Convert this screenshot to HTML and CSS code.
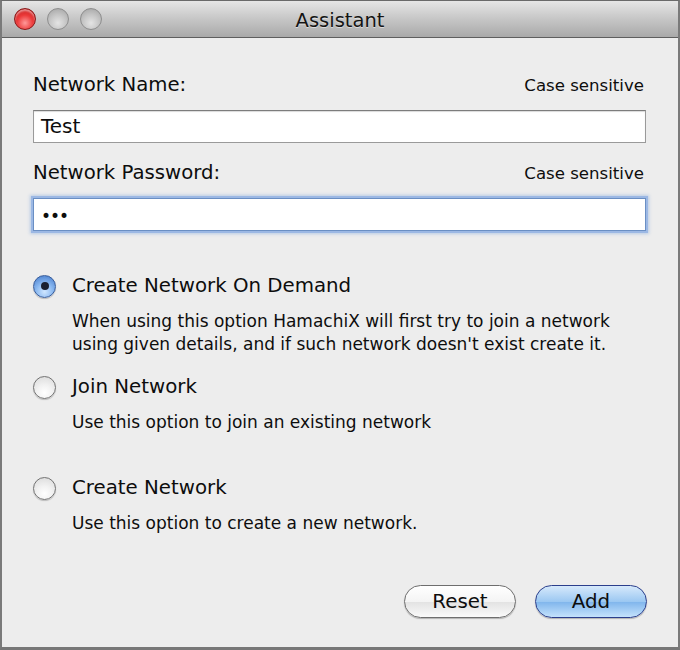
FILE: index.html
```html
<!DOCTYPE html>
<html>
<head>
<meta charset="utf-8">
<link rel="stylesheet" href="styles.css">
</head>
<body>
<div class="window">
  <div class="titlebar">
    <div class="lights">
      <span class="light red"></span>
      <span class="light gray"></span>
      <span class="light gray"></span>
    </div>
    <div class="title">Assistant</div>
  </div>
  <div class="content">
    <div class="field-head first">
      <span class="label">Network Name:</span>
      <span class="hint">Case sensitive</span>
    </div>
    <div class="input">Test</div>
    <div class="field-head second">
      <span class="label">Network Password:</span>
      <span class="hint">Case sensitive</span>
    </div>
    <div class="input focused"><span class="dots">•••</span></div>

    <div class="option opt1">
      <span class="radio checked"><span class="dot"></span></span>
      <span class="opt-label">Create Network On Demand</span>
    </div>
    <div class="desc">When using this option HamachiX will first try to join a network<br>using given details, and if such network doesn't exist create it.</div>

    <div class="option opt2">
      <span class="radio"></span>
      <span class="opt-label">Join Network</span>
    </div>
    <div class="desc">Use this option to join an existing network</div>

    <div class="option opt3">
      <span class="radio"></span>
      <span class="opt-label">Create Network</span>
    </div>
    <div class="desc">Use this option to create a new network.</div>

    <div class="buttons">
      <span class="btn">Reset</span>
      <span class="btn primary">Add</span>
    </div>
  </div>
</div>
</body>
</html>
```
FILE: styles.css
```css
html, body {
  margin: 0;
  padding: 0;
  background: #ededed;
}
body {
  width: 680px;
  height: 650px;
  overflow: hidden;
  font-family: "DejaVu Sans", "Liberation Sans", sans-serif;
  color: #0d0d0d;
}
.window {
  box-sizing: border-box;
  width: 680px;
  height: 650px;
  border: 2px solid #7a7a7a;
  border-top: 1px solid #6a6a6a;
  border-bottom: 3px solid #777;
  background: #ededed;
  display: flex;
  flex-direction: column;
}
.titlebar {
  height: 36px;
  flex: none;
  background: linear-gradient(#e6e6e6, #c9c9c9 45%, #a9a9a9);
  border-bottom: 1px solid #5e5e5e;
  position: relative;
  display: flex;
  align-items: center;
  justify-content: center;
}
.lights {
  position: absolute;
  left: 12px;
  top: 7px;
  display: flex;
  gap: 11px;
}
.light {
  width: 22px;
  height: 22px;
  border-radius: 50%;
  box-sizing: border-box;
}
.light.red {
  background: radial-gradient(circle at 50% 70%, #ff9a9a 0, #ec3b3b 45%, #b80f0f 100%);
  border: 1px solid #8a1a1a;
  box-shadow: inset 0 2px 2px rgba(255,255,255,0.5);
}
.light.gray {
  background: radial-gradient(circle at 50% 70%, #e4e4e4 0, #c4c4c4 50%, #a0a0a0 100%);
  border: 1px solid #8e8e8e;
}
.title {
  font-size: 19.5px;
  line-height: 24px;
  padding-top: 3px;
  color: #141414;
  text-shadow: 0 1px 0 rgba(255,255,255,0.5);
}
.content {
  padding: 0 31px 0 31px;
  display: flex;
  flex-direction: column;
}
.field-head {
  display: flex;
  justify-content: space-between;
  align-items: baseline;
  height: 22px;
  line-height: 22px;
}
.field-head.first { margin-top: 36px; }
.field-head.second { margin-top: 19px; }
.label {
  font-size: 19.7px;
}
.hint {
  font-size: 16.6px;
  margin-right: 3px;
}
.input {
  margin-top: 14px;
  height: 33px;
  box-sizing: border-box;
  border: 1px solid #9a9a9a;
  border-top-color: #7c7c7c;
  background: #fff;
  font-size: 20px;
  line-height: 30px;
  padding: 0 0 0 7px;
  box-shadow: inset 0 1px 1px rgba(0,0,0,0.15);
  margin-right: 1px;
}
.input.focused {
  margin-top: 14px;
  border: 1px solid #6a8fc4;
  box-shadow: 0 0 0 2px #9cb8e4, 0 0 3px 3px rgba(120,160,220,0.45);
}
.dots {
  font-size: 17px;
  letter-spacing: -1px;
  position: relative;
  top: 1px;
}
.option {
  display: flex;
  align-items: center;
  gap: 16px;
  height: 24px;
  line-height: 24px;
}
.opt1 { margin-top: 43px; }
.opt2 { margin-top: 19px; }
.opt3 { margin-top: 42px; }
.radio {
  width: 23px;
  height: 23px;
  flex: none;
  box-sizing: border-box;
  border-radius: 50%;
  border: 1px solid #727272;
  background: radial-gradient(circle at 50% 75%, #ffffff 0, #f2f2f2 40%, #d8d8d8 100%);
  box-shadow: 0 1px 1px rgba(0,0,0,0.2);
  display: flex;
  align-items: center;
  justify-content: center;
}
.radio.checked {
  border-color: #3a5d9a;
  background: radial-gradient(circle at 50% 75%, #cfe6ff 0, #8ab8f0 45%, #3f76c9 100%);
}
.dot {
  width: 8px;
  height: 8px;
  border-radius: 50%;
  background: #1a2030;
}
.opt-label {
  font-size: 19.8px;
}
.desc {
  margin-top: 12px;
  margin-left: 39px;
  font-size: 17px;
  line-height: 23px;
}
.buttons {
  margin-top: 50px;
  display: flex;
  justify-content: flex-end;
  gap: 19px;
}
.btn {
  width: 112px;
  height: 33px;
  box-sizing: border-box;
  border-radius: 17px;
  border: 1px solid #6e6e6e;
  background: linear-gradient(#ffffff, #f4f4f4 50%, #e2e2e2 51%, #fafafa);
  display: flex;
  align-items: center;
  justify-content: center;
  font-size: 19.8px;
  box-shadow: 0 1px 1px rgba(0,0,0,0.25);
}
.btn.primary {
  border-color: #2b3f8c;
  background: linear-gradient(#d6e9fb, #9cc8f2 50%, #7fb5ec 51%, #c4e2fc);
}
```
